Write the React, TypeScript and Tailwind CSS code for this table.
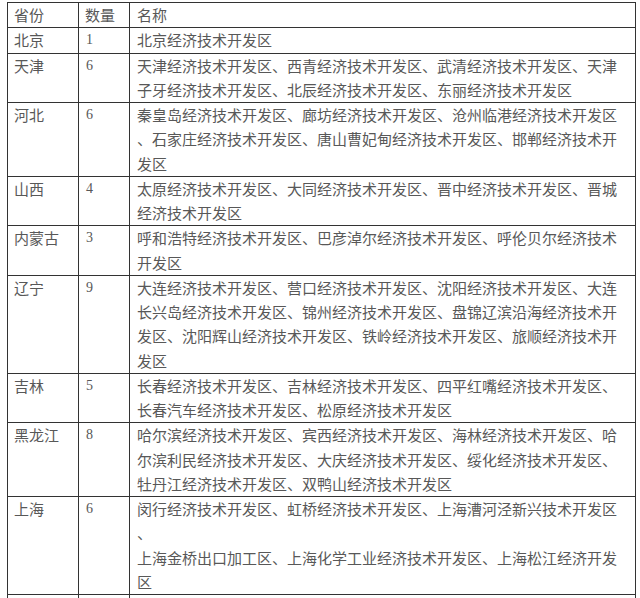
import React from "react";

type Row = { p: string; n: string; lines: string[] };

const rows: Row[] = [
  { p: "北京", n: "1", lines: ["北京经济技术开发区"] },
  {
    p: "天津",
    n: "6",
    lines: [
      "天津经济技术开发区、西青经济技术开发区、武清经济技术开发区、天津",
      "子牙经济技术开发区、北辰经济技术开发区、东丽经济技术开发区",
    ],
  },
  {
    p: "河北",
    n: "6",
    lines: [
      "秦皇岛经济技术开发区、廊坊经济技术开发区、沧州临港经济技术开发区",
      "、石家庄经济技术开发区、唐山曹妃甸经济技术开发区、邯郸经济技术开",
      "发区",
    ],
  },
  {
    p: "山西",
    n: "4",
    lines: [
      "太原经济技术开发区、大同经济技术开发区、晋中经济技术开发区、晋城",
      "经济技术开发区",
    ],
  },
  {
    p: "内蒙古",
    n: "3",
    lines: [
      "呼和浩特经济技术开发区、巴彦淖尔经济技术开发区、呼伦贝尔经济技术",
      "开发区",
    ],
  },
  {
    p: "辽宁",
    n: "9",
    lines: [
      "大连经济技术开发区、营口经济技术开发区、沈阳经济技术开发区、大连",
      "长兴岛经济技术开发区、锦州经济技术开发区、盘锦辽滨沿海经济技术开",
      "发区、沈阳辉山经济技术开发区、铁岭经济技术开发区、旅顺经济技术开",
      "发区",
    ],
  },
  {
    p: "吉林",
    n: "5",
    lines: [
      "长春经济技术开发区、吉林经济技术开发区、四平红嘴经济技术开发区、",
      "长春汽车经济技术开发区、松原经济技术开发区",
    ],
  },
  {
    p: "黑龙江",
    n: "8",
    lines: [
      "哈尔滨经济技术开发区、宾西经济技术开发区、海林经济技术开发区、哈",
      "尔滨利民经济技术开发区、大庆经济技术开发区、绥化经济技术开发区、",
      "牡丹江经济技术开发区、双鸭山经济技术开发区",
    ],
  },
  {
    p: "上海",
    n: "6",
    lines: [
      "闵行经济技术开发区、虹桥经济技术开发区、上海漕河泾新兴技术开发区",
      "、",
      "上海金桥出口加工区、上海化学工业经济技术开发区、上海松江经济开发",
      "区",
    ],
  },
  { p: "", n: "", lines: [""] },
];

const cjk = "[font-family:'Noto_Sans_CJK_SC','Noto_Sans',sans-serif]";

export default function App() {
  return (
    <div className="w-[640px] h-[598px] overflow-hidden bg-white pt-[2px] pl-[7px]">
      <table
        className={`border-collapse table-fixed w-[628px] text-[15px] leading-[24.25px] text-[#585858] ${cjk}`}
      >
        <colgroup>
          <col className="w-[71px]" />
          <col className="w-[51px]" />
          <col className="w-[506px]" />
        </colgroup>
        <tbody>
          <tr>
            <td className="border border-[#333] align-top pl-[6px] whitespace-nowrap">省份</td>
            <td className="border border-[#333] align-top pl-[6px] whitespace-nowrap">数量</td>
            <td className="border border-[#333] align-top pl-[7px] whitespace-nowrap">名称</td>
          </tr>
          {rows.map((r, i) => (
            <tr key={i}>
              <td className="border border-[#333] align-top pl-[6px] whitespace-nowrap">
                {r.p}
              </td>
              <td className="border border-[#333] align-top pl-[7px] whitespace-nowrap [font-family:'Liberation_Serif',serif] text-[14px]">
                {r.n}
              </td>
              <td className="border border-[#333] align-top pl-[7px]">
                {r.lines.map((l, j) => (
                  <div key={j} className="whitespace-nowrap h-[24.25px]">
                    {l}
                  </div>
                ))}
              </td>
            </tr>
          ))}
        </tbody>
      </table>
    </div>
  );
}
